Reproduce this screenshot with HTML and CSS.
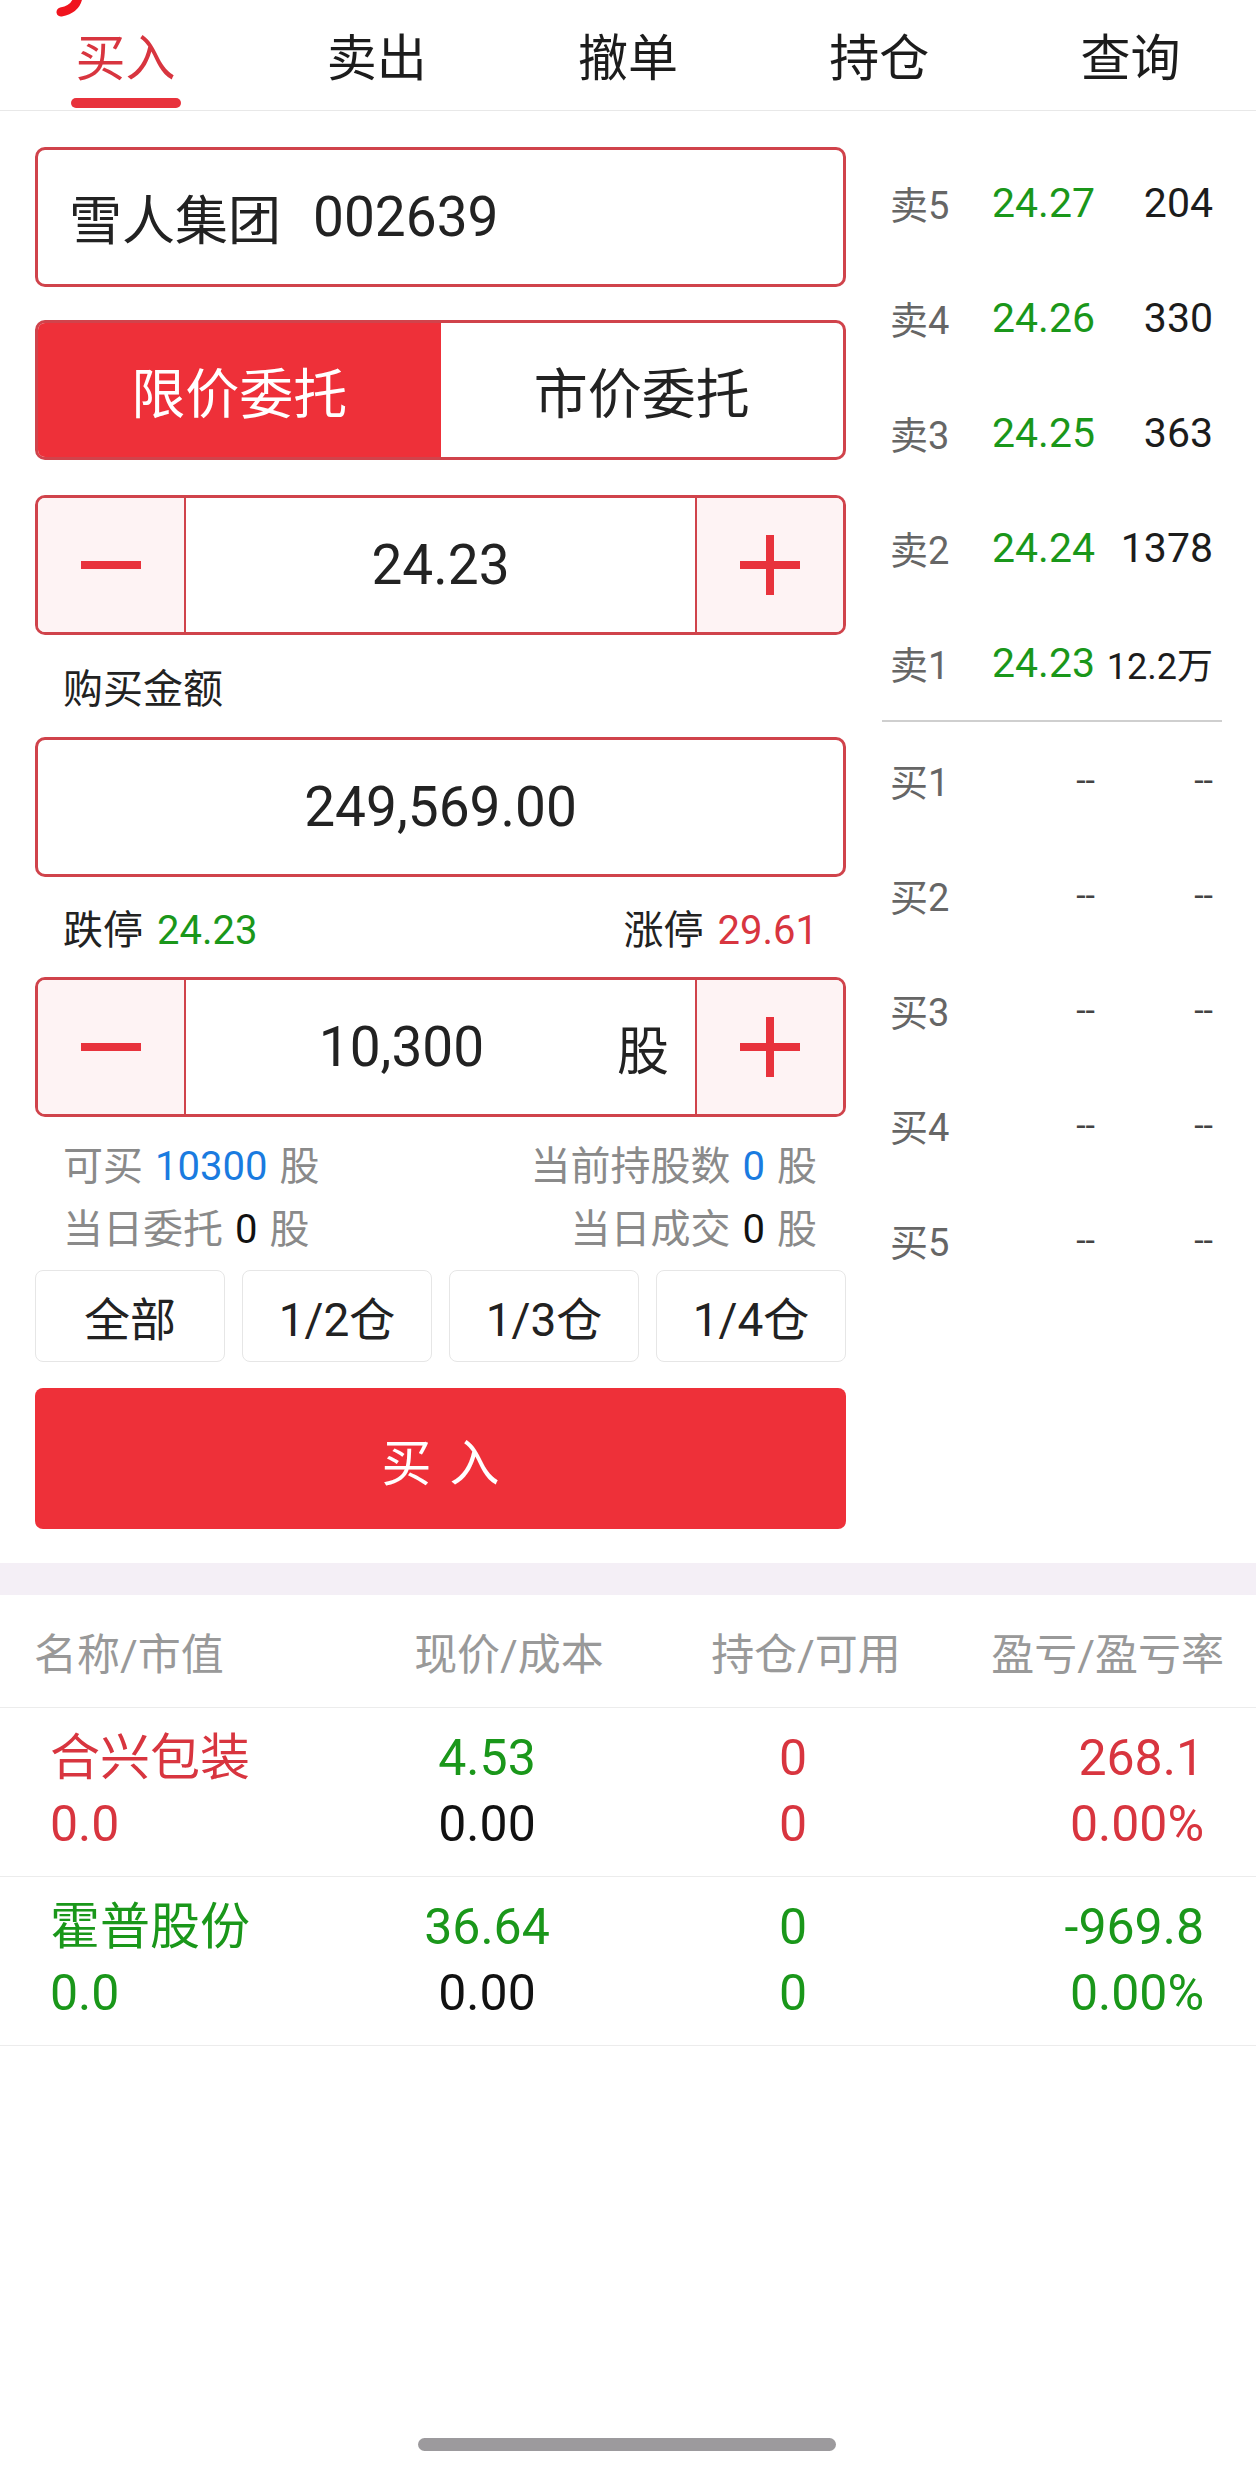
FILE: index.html
```html
<!DOCTYPE html>
<html lang="zh-CN">
<head>
  <meta charset="UTF-8">
  <title>买入</title>
  <link rel="stylesheet" href="styles.css">
</head>
<body>

  <svg class="corner-mark" width="32" height="20" viewBox="0 0 32 20">
    <path d="M24 -3 Q22 9 7 12" fill="none" stroke="#f0141e" stroke-width="9" stroke-linecap="round"/>
  </svg>

  <div class="tabs">
    <div class="tab active"><span>买入</span><i></i></div>
    <div class="tab"><span>卖出</span></div>
    <div class="tab"><span>撤单</span></div>
    <div class="tab"><span>持仓</span></div>
    <div class="tab"><span>查询</span></div>
  </div>

  <div class="trade">
    <div class="form">
      <div class="stock-box">雪人集团<span class="code">002639</span></div>

      <div class="order-type">
        <div class="type on">限价委托</div>
        <div class="type">市价委托</div>
      </div>

      <div class="stepper">
        <div class="step"><span class="minus"></span></div>
        <div class="step-value"><span class="num">24.23</span></div>
        <div class="step"><span class="plus"></span></div>
      </div>

      <div class="field-label">购买金额</div>

      <div class="amount-box">249,569.00</div>

      <div class="limits">
        <span>跌停<b class="green">24.23</b></span>
        <span>涨停<b class="red">29.61</b></span>
      </div>

      <div class="stepper">
        <div class="step"><span class="minus"></span></div>
        <div class="step-value"><span class="num">10,300</span><span class="unit">股</span></div>
        <div class="step"><span class="plus"></span></div>
      </div>

      <div class="info">
        <div class="info-row">
          <span>可买<b class="blue">10300</b>股</span>
          <span>当前持股数<b class="blue">0</b>股</span>
        </div>
        <div class="info-row">
          <span>当日委托<b>0</b>股</span>
          <span>当日成交<b>0</b>股</span>
        </div>
      </div>

      <div class="quick">
        <div class="quick-btn">全部</div>
        <div class="quick-btn">1/2仓</div>
        <div class="quick-btn">1/3仓</div>
        <div class="quick-btn">1/4仓</div>
      </div>

      <button class="buy">买入</button>
    </div>

    <div class="book">
      <div class="book-row"><span class="lvl">卖5</span><span class="price">24.27</span><span class="vol">204</span></div>
      <div class="book-row"><span class="lvl">卖4</span><span class="price">24.26</span><span class="vol">330</span></div>
      <div class="book-row"><span class="lvl">卖3</span><span class="price">24.25</span><span class="vol">363</span></div>
      <div class="book-row"><span class="lvl">卖2</span><span class="price">24.24</span><span class="vol">1378</span></div>
      <div class="book-row"><span class="lvl">卖1</span><span class="price">24.23</span><span class="vol small">12.2万</span></div>
      <div class="book-line"></div>
      <div class="book-row"><span class="lvl">买1</span><span class="price empty">--</span><span class="vol empty">--</span></div>
      <div class="book-row"><span class="lvl">买2</span><span class="price empty">--</span><span class="vol empty">--</span></div>
      <div class="book-row"><span class="lvl">买3</span><span class="price empty">--</span><span class="vol empty">--</span></div>
      <div class="book-row"><span class="lvl">买4</span><span class="price empty">--</span><span class="vol empty">--</span></div>
      <div class="book-row"><span class="lvl">买5</span><span class="price empty">--</span><span class="vol empty">--</span></div>
    </div>
  </div>

  <div class="band"></div>

  <div class="pos-head">
    <span>名称/市值</span>
    <span class="c">现价/成本</span>
    <span class="c">持仓/可用</span>
    <span class="r">盈亏/盈亏率</span>
  </div>

  <div class="pos-row">
    <div class="red"><div>合兴包装</div><div>0.0</div></div>
    <div class="c"><div class="green">4.53</div><div class="dark">0.00</div></div>
    <div class="c red"><div>0</div><div>0</div></div>
    <div class="r red"><div>268.1</div><div>0.00%</div></div>
  </div>

  <div class="pos-row">
    <div class="green"><div>霍普股份</div><div>0.0</div></div>
    <div class="c"><div class="green">36.64</div><div class="dark">0.00</div></div>
    <div class="c green"><div>0</div><div>0</div></div>
    <div class="r green"><div>-969.8</div><div>0.00%</div></div>
  </div>

  <div class="home-bar"></div>

</body>
</html>
```

FILE: styles.css
```css
body {
  margin: 0;
  font-family: Roboto, "Noto Sans CJK SC", sans-serif;
  color: #222;
  background: #fff;
}
b {
  font-weight: normal;
}
.red { color: #d8353f; }
.green { color: #1a971a; }
.blue { color: #1a7be0; }
.dark { color: #111; }

.corner-mark {
  position: absolute;
  top: 0;
  left: 54px;
}

/* tabs */
.tabs {
  display: flex;
  height: 110px;
  border-bottom: 1px solid #e8e8e8;
}
.tab {
  flex: 1;
  display: flex;
  flex-direction: column;
  align-items: center;
  padding-top: 34px;
  font-size: 50px;
  line-height: 50px;
  color: #1c1c1c;
}
.tab.active {
  color: #d8353f;
}
.tab i {
  display: block;
  width: 110px;
  height: 10px;
  margin-top: 14px;
  border-radius: 5px;
  background: #e8323c;
}

/* trade area */
.trade {
  display: flex;
  align-items: flex-start;
}
.form {
  width: 811px;
  margin: 36px 0 0 35px;
}
.stock-box,
.amount-box {
  box-sizing: border-box;
  height: 140px;
  border: 3px solid #d0434b;
  border-radius: 10px;
  display: flex;
  align-items: center;
}
.stock-box {
  padding-left: 31px;
  font-size: 53px;
}
.stock-box .code {
  margin-left: 32px;
  font-size: 55px;
}
.amount-box {
  justify-content: center;
  font-size: 55px;
}
.order-type {
  box-sizing: border-box;
  display: flex;
  height: 140px;
  margin-top: 33px;
  border: 3px solid #d0434b;
  border-radius: 10px;
  overflow: hidden;
}
.type {
  flex: 1;
  display: flex;
  align-items: center;
  justify-content: center;
  font-size: 54px;
}
.type.on {
  background: #ee3039;
  color: #fff;
}
.stepper {
  box-sizing: border-box;
  display: flex;
  height: 140px;
  margin-top: 35px;
  border: 3px solid #d0434b;
  border-radius: 10px;
  overflow: hidden;
}
.step {
  width: 146px;
  background: #fef3f4;
  display: flex;
  align-items: center;
  justify-content: center;
}
.step:first-child {
  border-right: 2px solid #d0434b;
}
.step:last-child {
  border-left: 2px solid #d0434b;
}
.minus {
  width: 60px;
  height: 8px;
  background: #e8323c;
}
.plus {
  position: relative;
  width: 60px;
  height: 60px;
}
.plus::before,
.plus::after {
  content: "";
  position: absolute;
  background: #e8323c;
}
.plus::before {
  left: 0;
  top: 26px;
  width: 60px;
  height: 8px;
}
.plus::after {
  left: 26px;
  top: 0;
  width: 8px;
  height: 60px;
}
.step-value {
  flex: 1;
  display: flex;
  align-items: center;
  font-size: 52px;
}
.step-value .num {
  flex: 1;
  text-align: center;
  font-size: 55px;
}
.step-value .unit {
  width: 52px;
  padding-right: 26px;
}
.field-label {
  height: 102px;
  display: flex;
  align-items: center;
  padding-left: 28px;
  font-size: 40px;
}
.limits {
  height: 100px;
  display: flex;
  align-items: center;
  justify-content: space-between;
  padding: 0 28px 0 28px;
  font-size: 40px;
}
.limits b {
  margin-left: 14px;
}
.limits + .stepper {
  margin-top: 0;
}
.info {
  padding: 14px 29px 0 28px;
  font-size: 40px;
  color: #8a8a8a;
}
.info-row {
  height: 63px;
  display: flex;
  align-items: center;
  justify-content: space-between;
}
.info-row b {
  margin: 0 12px;
  color: #111;
}
.info-row b.blue {
  color: #1a7be0;
}
.quick {
  display: grid;
  grid-template-columns: repeat(4, 1fr);
  gap: 17px;
  margin-top: 13px;
}
.quick-btn {
  box-sizing: border-box;
  height: 92px;
  border: 1px solid #e6e6e6;
  border-radius: 8px;
  display: flex;
  align-items: center;
  justify-content: center;
  font-size: 46px;
}
.buy {
  display: block;
  width: 100%;
  height: 141px;
  margin-top: 26px;
  border: none;
  border-radius: 8px;
  background: #ee3039;
  color: #fff;
  font-family: Roboto, "Noto Sans CJK SC", sans-serif;
  font-size: 50px;
  letter-spacing: 18px;
  text-indent: 18px;
}

/* order book */
.book {
  width: 340px;
  margin: 34px 0 0 36px;
}
.book-row {
  display: grid;
  grid-template-columns: 85px 120px 118px;
  align-items: center;
  height: 115px;
  padding: 0 9px 0 8px;
  font-size: 41px;
}
.lvl {
  font-size: 38px;
  color: #666;
}
.price {
  text-align: right;
  color: #1a971a;
}
.vol {
  text-align: right;
  color: #1c1c1c;
}
.vol.small {
  font-size: 36px;
}
.empty {
  color: #444;
  font-size: 34px;
}
.book-line {
  height: 2px;
  background: #cfcfcf;
}

/* positions */
.band {
  height: 32px;
  margin-top: 34px;
  background: #f4eff6;
}
.pos-head {
  display: grid;
  grid-template-columns: 326px 298px 296px 1fr;
  align-items: center;
  height: 112px;
  padding: 0 32px 0 34px;
  border-bottom: 1px solid #ececec;
  font-size: 43px;
  color: #999;
}
.c { text-align: center; }
.r { text-align: right; }
.pos-row {
  display: grid;
  grid-template-columns: 287px 300px 312px 1fr;
  padding: 17px 52px 19px 50px;
  border-bottom: 1px solid #ececec;
  font-size: 50px;
  line-height: 66px;
}

.home-bar {
  position: fixed;
  left: 418px;
  bottom: 20px;
  width: 418px;
  height: 13px;
  border-radius: 7px;
  background: #9c9a9d;
}
```
